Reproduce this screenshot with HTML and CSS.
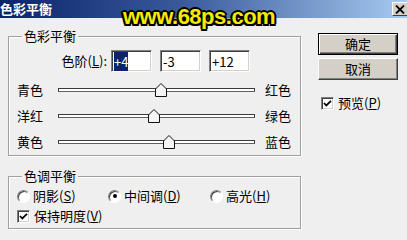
FILE: index.html
```html
<!DOCTYPE html>
<html lang="zh-CN">
<head>
    <meta charset="UTF-8">
    <meta name="viewport" content="width=device-width, initial-scale=1.0">
    <title>色彩平衡</title>
    <link rel="stylesheet" href="styles.css">
</head>
<body>
    <div class="window">
        <div class="titlebar">
            <span class="title">色彩平衡</span>
            <span class="close">
                <svg width="10" height="9" viewBox="0 0 10 9"><path d="M1 0.5 L9 8.5 M9 0.5 L1 8.5" stroke="#000" stroke-width="1.8"/></svg>
            </span>
        </div>
        <div class="watermark">www.68ps.com</div>

        <div class="dialog">
            <div class="left">
                <div class="group">
                    <span class="group-title">色彩平衡</span>
                    <div class="levels">
                        <span class="levels-label">色阶(<u>L</u>):</span>
                        <div class="field"><span class="selected">+4</span></div>
                        <div class="field">-3</div>
                        <div class="field">+12</div>
                    </div>
                    <div class="sliders">
                        <div class="slider-row">
                            <span class="slider-label">青色</span>
                            <div class="track">
                                <svg class="thumb" style="left: 96px" width="12" height="14" viewBox="0 0 12 14"><polygon points="0.5,6 6,0.5 11.5,6 11.5,13.5 0.5,13.5" fill="#f4f4f4" stroke="#111"/></svg>
                            </div>
                            <span class="slider-label slider-label-end">红色</span>
                        </div>
                        <div class="slider-row">
                            <span class="slider-label">洋红</span>
                            <div class="track">
                                <svg class="thumb" style="left: 89px" width="12" height="14" viewBox="0 0 12 14"><polygon points="0.5,6 6,0.5 11.5,6 11.5,13.5 0.5,13.5" fill="#f4f4f4" stroke="#111"/></svg>
                            </div>
                            <span class="slider-label slider-label-end">绿色</span>
                        </div>
                        <div class="slider-row">
                            <span class="slider-label">黄色</span>
                            <div class="track">
                                <svg class="thumb" style="left: 104px" width="12" height="14" viewBox="0 0 12 14"><polygon points="0.5,6 6,0.5 11.5,6 11.5,13.5 0.5,13.5" fill="#f4f4f4" stroke="#111"/></svg>
                            </div>
                            <span class="slider-label slider-label-end">蓝色</span>
                        </div>
                    </div>
                </div>

                <div class="group group-tone">
                    <span class="group-title">色调平衡</span>
                    <div class="radios">
                        <span class="option option-1"><span class="radio"></span>阴影(<u>S</u>)</span>
                        <span class="option option-2"><span class="radio checked"></span>中间调(<u>D</u>)</span>
                        <span class="option"><span class="radio"></span>高光(<u>H</u>)</span>
                    </div>
                    <div class="option check-row">
                        <span class="checkbox"><svg width="11" height="11" viewBox="0 0 11 11"><polyline points="2,5 4.3,7.5 9,2.8" fill="none" stroke="#000" stroke-width="1.8"/></svg></span>保持明度(<u>V</u>)
                    </div>
                </div>
            </div>

            <div class="right">
                <div class="button button-default">确定</div>
                <div class="button">取消</div>
                <div class="option preview">
                    <span class="checkbox"><svg width="11" height="11" viewBox="0 0 11 11"><polyline points="2,5 4.3,7.5 9,2.8" fill="none" stroke="#000" stroke-width="1.8"/></svg></span>预览(<u>P</u>)
                </div>
            </div>
        </div>
    </div>
</body>
</html>
```

FILE: styles.css
```css
body {
    margin: 0;
    font-family: "Noto Sans CJK SC", "Liberation Sans", sans-serif;
    font-size: 13px;
    line-height: 14px;
    color: #000;
    background-color: #efefef;
}
.window {
    position: relative;
    width: 407px;
    height: 240px;
    overflow: hidden;
}
.titlebar {
    height: 18px;
    display: flex;
    align-items: center;
    justify-content: space-between;
    background: linear-gradient(to right, #0a246a, #3a5a9c 45%, #a6caf0);
}
.title {
    color: #fff;
    font-weight: bold;
    padding-left: 0;
}
.close {
    width: 16px;
    height: 14px;
    margin-right: -1px;
    display: flex;
    align-items: center;
    justify-content: center;
    background: #d4d0c8;
    border: 1px solid;
    border-color: #fff #404040 #404040 #fff;
    box-sizing: border-box;
}
.watermark {
    position: absolute;
    left: 123px;
    top: 4px;
    font-family: "Liberation Sans", Arial, sans-serif;
    font-weight: bold;
    font-size: 22px;
    line-height: 26px;
    letter-spacing: -0.5px;
    color: #f6ea00;
    text-shadow:
        2px 0 0 #000, -2px 0 0 #000, 0 2px 0 #000, 0 -2px 0 #000,
        1.5px 1.5px 0 #000, -1.5px 1.5px 0 #000, 1.5px -1.5px 0 #000, -1.5px -1.5px 0 #000;
}
.dialog {
    display: flex;
}
.left {
    padding-left: 8px;
}
.group {
    width: 293px;
    margin-top: 18px;
    border: 1px solid #a0a0a0;
    box-shadow: inset 1px 1px 0 #fff, 1px 1px 0 #fff;
    box-sizing: border-box;
}
.group-title {
    display: block;
    width: fit-content;
    margin: -8px 0 0 13px;
    padding: 0 2px;
    background-color: #efefef;
}
.levels {
    display: flex;
    align-items: center;
    height: 22px;
    margin-top: 7px;
}
.levels-label {
    width: 98px;
    text-align: right;
}
.field {
    width: 41px;
    height: 22px;
    margin-left: 8px;
    padding: 4px 0 0 2px;
    box-sizing: border-box;
    background: #fff;
    border: 1px solid;
    border-color: #808080 #fff #fff #808080;
    box-shadow: inset 1px 1px 0 #404040, inset -1px -1px 0 #d4d0c8;
}
.levels-label + .field {
    margin-left: 4px;
}
.selected {
    background-color: #0a246a;
    color: #fff;
}
.sliders {
    margin-top: 5px;
}
.slider-row {
    display: flex;
    align-items: center;
    height: 26px;
    padding-left: 8px;
}
.slider-label {
    flex-shrink: 0;
    width: 27px;
    white-space: nowrap;
}
.slider-label-end {
    margin-left: 10px;
}
.track {
    flex-shrink: 0;
    position: relative;
    width: 197px;
    height: 4px;
    margin-left: 14px;
    box-sizing: border-box;
    background: #fff;
    border: 1px solid #3a3a3a;
    border-bottom-color: #606060;
}
.thumb {
    position: absolute;
    top: -6px;
}
.group-tone {
    margin-top: 20px;
    padding-bottom: 3px;
}
.radios {
    display: flex;
    margin-top: 4px;
    padding-left: 8px;
}
.option {
    display: flex;
    align-items: center;
    height: 18px;
    white-space: nowrap;
}
.option-1 {
    width: 91px;
}
.option-2 {
    width: 102px;
}
.radio {
    position: relative;
    flex-shrink: 0;
    width: 13px;
    height: 13px;
    margin-right: 3px;
    box-sizing: border-box;
    border-radius: 50%;
    background: #fff;
    border: 1px solid;
    border-color: #808080 #fff #fff #808080;
    box-shadow: inset 1px 1px 0 #404040;
}
.radio.checked::after {
    content: "";
    position: absolute;
    left: 3.5px;
    top: 3.5px;
    width: 4px;
    height: 4px;
    border-radius: 50%;
    background: #000;
}
.check-row {
    margin-top: 2px;
    padding-left: 8px;
}
.checkbox {
    flex-shrink: 0;
    display: flex;
    align-items: center;
    justify-content: center;
    width: 13px;
    height: 13px;
    margin-right: 4px;
    box-sizing: border-box;
    background: #fff;
    border: 1px solid;
    border-color: #808080 #fff #fff #808080;
    box-shadow: inset 1px 1px 0 #404040, inset -1px -1px 0 #d4d0c8;
}
.right {
    margin-left: 17px;
    padding-top: 15px;
}
.button {
    width: 80px;
    height: 22px;
    box-sizing: border-box;
    display: flex;
    align-items: center;
    justify-content: center;
    background: #d4d0c8;
    border: 1px solid;
    border-color: #fff #404040 #404040 #fff;
    box-shadow: inset -1px -1px 0 #808080;
}
.button + .button {
    margin-top: 3px;
}
.button-default {
    border: 1px solid #000;
    box-shadow: inset 1px 1px 0 #fff, inset -1px -1px 0 #404040, inset -2px -2px 0 #808080;
}
.preview {
    margin-top: 14px;
    padding-left: 3px;
}
```
